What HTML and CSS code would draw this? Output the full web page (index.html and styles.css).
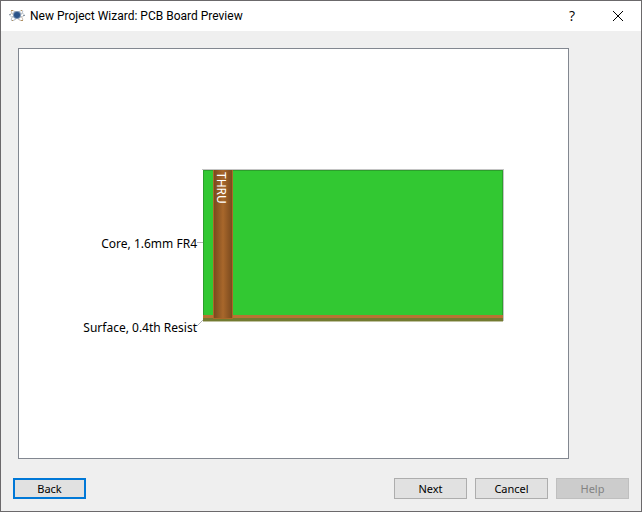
FILE: index.html
```html
<!DOCTYPE html>
<html lang="en">
<head>
<meta charset="utf-8">
<title>New Project Wizard: PCB Board Preview</title>
<link rel="stylesheet" href="styles.css">
</head>
<body>
<div class="window">
  <header class="titlebar">
    <svg class="app-icon" viewBox="0 0 16 16" aria-hidden="true">
      <g fill="none" stroke-width="1">
        <ellipse cx="8" cy="7" rx="7.5" ry="2.200" stroke="#c6cdd4"/>
        <ellipse cx="8" cy="7.500" rx="7.300" ry="2" transform="rotate(40 8 7.500)" stroke="#c9bdb0"/>
        <ellipse cx="8" cy="7.500" rx="7.300" ry="2" transform="rotate(-40 8 7.500)" stroke="#b9bec6"/>
      </g>
      <circle cx="8" cy="7" r="4" fill="#7b93b3"/>
      <circle cx="8" cy="7" r="3" fill="#2a5288"/>
      <g fill="#b09060">
        <rect x="2" y="2" width="2" height="1"/>
        <rect x="12" y="2" width="1" height="1"/>
        <rect x="3" y="12" width="1" height="1"/>
        <rect x="12" y="12" width="2" height="1"/>
      </g>
      <rect x="14" y="7" width="2" height="1" fill="#8d98a3"/>
      <rect x="0" y="6" width="2" height="1" fill="#9ba5ae"/>
    </svg>
    <h1 class="title">New Project Wizard: PCB Board Preview</h1>
    <button class="caption-button help-button" type="button" aria-label="Context help">?</button>
    <button class="caption-button" type="button" aria-label="Close">
      <svg class="close-icon" viewBox="0 0 10 10" aria-hidden="true"><path d="M0 0L10 10M10 0L0 10" stroke="#000" fill="none"/></svg>
    </button>
  </header>
  <main class="content">
    <div class="preview">
      <svg class="board" viewBox="19 49 549 409">
        <defs>
          <linearGradient id="barrel">
            <stop offset="0" stop-color="#7a4a1e"/>
            <stop offset=".5" stop-color="#a8672b"/>
            <stop offset="1" stop-color="#7a4a1e"/>
          </linearGradient>
        </defs>
        <rect x="202" y="169" width="302" height="1" fill="#c4c4c4"/>
        <rect x="503" y="169" width="1" height="152" fill="#c4c4c4"/>
        <rect x="203" y="170" width="300" height="146" fill="#32c832"/>
        <path d="M203.500 316V170.500H502.500V316" fill="none" stroke="#2ba02b"/>
        <rect x="203" y="315" width="300" height="4" fill="#b87333"/>
        <rect x="203" y="318" width="300" height="3" fill="#727a30"/>
        <rect x="203" y="321" width="300" height="1" fill="#bfc19f"/>
        <rect x="213" y="170" width="20" height="149" fill="#aa6829"/>
        <rect x="214" y="170" width="18" height="148" fill="url(#barrel)"/>
        <path d="M197 242.500H203M197 326L203 320" fill="none" stroke="#b4b4b4"/>
        <text class="via-label" transform="translate(217 172) rotate(90)">THRU</text>
        <text class="layer-label" x="197" y="248">Core, 1.6mm FR4</text>
        <text class="layer-label" x="197" y="332">Surface, 0.4th Resist</text>
      </svg>
    </div>
  </main>
  <footer class="actions">
    <button class="button back" type="button">Back</button>
    <button class="button" type="button">Next</button>
    <button class="button" type="button">Cancel</button>
    <button class="button" type="button" disabled>Help</button>
  </footer>
</div>
</body>
</html>
```
FILE: styles.css
```css
* { box-sizing: border-box; }

body {
  margin: 0;
  font-family: "Noto Sans", "Open Sans", sans-serif;
  color: #000;
}

.window {
  display: flex;
  flex-direction: column;
  min-height: 100vh;
  background: #efefef;
  border: 1px solid #6b696b;
}

.titlebar {
  display: flex;
  align-items: center;
  height: 30px;
  padding-left: 8px;
  background: #fff;
}

.app-icon {
  width: 16px;
  height: 16px;
  margin-right: 5px;
}

.title {
  flex: 1;
  margin: 0;
  font: 400 12px/16px Roboto, sans-serif;
  white-space: nowrap;
}

.caption-button {
  display: flex;
  align-items: center;
  justify-content: center;
  width: 46px;
  height: 30px;
  padding: 0;
  border: 0;
  background: transparent;
  color: #000;
}

.help-button { font: 400 14px/16px "Open Sans", sans-serif; }

.close-icon {
  width: 10px;
  height: 10px;
  overflow: visible;
}

.content {
  display: flex;
  flex: 1;
  padding: 17px 72px 19px 17px;
}

.preview {
  display: flex;
  flex: 1;
  border: 1px solid #828790;
  background: #fff;
}

.board {
  flex: 1;
  width: 100%;
  min-width: 0;
}

.layer-label {
  font: 12px "Noto Sans", sans-serif;
  text-anchor: end;
}

.via-label {
  font: 12px "Noto Sans", sans-serif;
  fill: #fff;
}

.actions {
  display: flex;
  gap: 8px;
  padding: 0 12px;
  margin-bottom: 12px;
}

.button {
  width: 73px;
  height: 21px;
  padding: 0;
  border: 1px solid #adadad;
  background: #e1e1e1;
  color: #000;
  font: 11px/16px "Noto Sans", sans-serif;
}

.button:disabled {
  border-color: #bfbfbf;
  background: #ccc;
  color: #838383;
}

.back {
  margin-right: auto;
  border: 2px solid #0078d7;
}
```
